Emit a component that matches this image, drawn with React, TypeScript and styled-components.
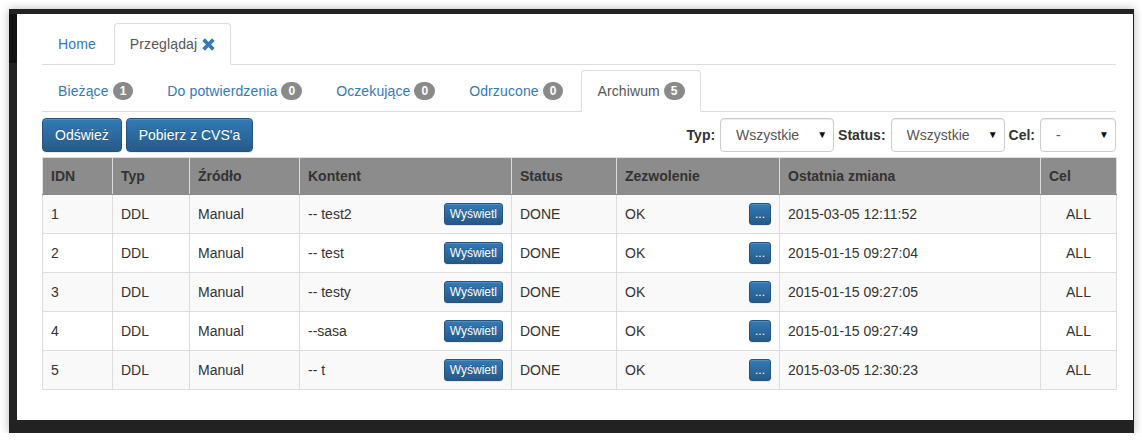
import React from 'react';
import styled, { createGlobalStyle } from 'styled-components';

const GlobalStyle = createGlobalStyle`
  html, body {
    margin: 0;
    padding: 0;
    background: #fff;
  }

  body {
    font-family: "Liberation Sans", Arial, Helvetica, sans-serif;
    font-size: 14px;
    line-height: 20px;
    color: #333;
  }

  * {
    box-sizing: border-box;
  }
`

type Row = {
  id: number;
  type: string;
  source: string;
  content: string;
  status: string;
  permission: string;
  changed: string;
  target: string;
}

const rows: Row[] = [
  {id: 1, type: 'DDL', source: 'Manual', content: '-- test2', status: 'DONE', permission: 'OK', changed: '2015-03-05 12:11:52', target: 'ALL'},
  {id: 2, type: 'DDL', source: 'Manual', content: '-- test', status: 'DONE', permission: 'OK', changed: '2015-01-15 09:27:04', target: 'ALL'},
  {id: 3, type: 'DDL', source: 'Manual', content: '-- testy', status: 'DONE', permission: 'OK', changed: '2015-01-15 09:27:05', target: 'ALL'},
  {id: 4, type: 'DDL', source: 'Manual', content: '--sasa', status: 'DONE', permission: 'OK', changed: '2015-01-15 09:27:49', target: 'ALL'},
  {id: 5, type: 'DDL', source: 'Manual', content: '-- t', status: 'DONE', permission: 'OK', changed: '2015-03-05 12:30:23', target: 'ALL'},
]

const subTabs = [
  {label: 'Bieżące', count: 1},
  {label: 'Do potwierdzenia', count: 0},
  {label: 'Oczekujące', count: 0},
  {label: 'Odrzucone', count: 0},
  {label: 'Archiwum', count: 5, active: true},
]

const columns = [
  {title: 'IDN', width: 70},
  {title: 'Typ', width: 77},
  {title: 'Źródło', width: 110},
  {title: 'Kontent', width: 212},
  {title: 'Status', width: 105},
  {title: 'Zezwolenie', width: 163},
  {title: 'Ostatnia zmiana', width: 261},
  {title: 'Cel', width: 76},
]

const CloseIcon = () => (
  <svg width="13" height="13" viewBox="0 0 12 12" style={{marginLeft: 5, marginTop: 1}}>
    <path d="M1.5 1.5 L10.5 10.5 M10.5 1.5 L1.5 10.5" stroke="#337ab7" strokeWidth="3.3" />
  </svg>
)

const Select = ({value, width}: {value: string; width: number}) => (
  <SelectWrap style={{width}}>
    <SelectBox defaultValue={value}>
      <option>{value}</option>
    </SelectBox>
    <Caret>▼</Caret>
  </SelectWrap>
)

const App = () => {
  return (
    <>
      <GlobalStyle/>
      <Frame>
        <Panel>
          <Tabs>
            <Tab><TabLink>Home</TabLink></Tab>
            <Tab $active><TabLink $active>Przeglądaj<CloseIcon/></TabLink></Tab>
          </Tabs>

          <Tabs $top={5}>
            {subTabs.map((t) => (
              <Tab key={t.label} $active={t.active}>
                <TabLink $active={t.active}>
                  {t.label}
                  <Badge>{t.count}</Badge>
                </TabLink>
              </Tab>
            ))}
          </Tabs>

          <Toolbar>
            <ButtonGroup>
              <Button>Odśwież</Button>
              <Button>Pobierz z CVS'a</Button>
            </ButtonGroup>
            <Filters>
              <FilterLabel>Typ:</FilterLabel>
              <Select value="Wszystkie" width={114}/>
              <FilterLabel>Status:</FilterLabel>
              <Select value="Wszystkie" width={114}/>
              <FilterLabel>Cel:</FilterLabel>
              <Select value="-" width={76}/>
            </Filters>
          </Toolbar>

          <Table>
            <colgroup>
              {columns.map((c) => <col key={c.title} style={{width: c.width}}/>)}
            </colgroup>
            <thead>
              <tr>
                {columns.map((c) => <Th key={c.title}>{c.title}</Th>)}
              </tr>
            </thead>
            <tbody>
              {rows.map((r) => (
                <Tr key={r.id}>
                  <Td>{r.id}</Td>
                  <Td>{r.type}</Td>
                  <Td>{r.source}</Td>
                  <Td>
                    <CellSplit>
                      <span>{r.content}</span>
                      <SmallButton>Wyświetl</SmallButton>
                    </CellSplit>
                  </Td>
                  <Td>{r.status}</Td>
                  <Td>
                    <CellSplit>
                      <span>{r.permission}</span>
                      <SmallButton>...</SmallButton>
                    </CellSplit>
                  </Td>
                  <Td>{r.changed}</Td>
                  <Td $center>{r.target}</Td>
                </Tr>
              ))}
            </tbody>
          </Table>
        </Panel>
      </Frame>
    </>
  )
}

const Frame = styled.div`
  width: 1125px;
  height: 424px;
  margin: 9px 0 0 9px;
  padding: 5px 1px 13px 8px;
  background: linear-gradient(#111, #111) 0 5px / 8px 49px no-repeat, #222;
  box-shadow: 0 0 9px rgba(0, 0, 0, 0.28);
`

const Panel = styled.div`
  height: 100%;
  padding: 9px 17px 0 25px;
  background: #fff;
`

const Tabs = styled.ul<{ $top?: number }>`
  display: flex;
  margin: ${({ $top }) => $top || 0}px 0 0;
  padding: 0;
  list-style: none;
  border-bottom: 1px solid #ddd;
`

const Tab = styled.li<{ $active?: boolean }>`
  margin-right: 2px;
  margin-bottom: -1px;
`

const TabLink = styled.a<{ $active?: boolean }>`
  display: flex;
  align-items: center;
  padding: 10px 15px;
  line-height: 20px;
  letter-spacing: 0.12px;
  border: 1px solid transparent;
  border-radius: 4px 4px 0 0;
  color: #337ab7;
  text-decoration: none;
  cursor: pointer;

  ${({ $active }) => $active && `
    color: #555;
    background: #fff;
    border-color: #ddd #ddd transparent;
  `}
`

const Badge = styled.span`
  display: inline-block;
  min-width: 10px;
  margin-left: 4px;
  padding: 3px 7px;
  font-size: 12px;
  font-weight: 700;
  line-height: 12px;
  letter-spacing: 0;
  color: #fff;
  text-align: center;
  background: #8a8a8a;
  border-radius: 10px;
`

const Toolbar = styled.div`
  display: flex;
  justify-content: space-between;
  align-items: center;
  margin-top: 6px;
`

const ButtonGroup = styled.div`
  display: flex;
  gap: 4px;
`

const Button = styled.button`
  height: 34px;
  padding: 6px 12px;
  font-family: inherit;
  font-size: 14px;
  line-height: 20px;
  color: #fff;
  text-shadow: 0 -1px 0 rgba(0, 0, 0, 0.2);
  background: linear-gradient(to bottom, #337ab7 0%, #265a88 100%);
  border: 1px solid #245580;
  border-radius: 4px;
  box-shadow: inset 0 1px 0 rgba(255, 255, 255, 0.15), 0 1px 1px rgba(0, 0, 0, 0.075);
  cursor: pointer;
`

const SmallButton = styled(Button)`
  height: 22px;
  padding: 1px 5px;
  font-size: 12px;
  line-height: 18px;
  border-radius: 3px;
`

const Filters = styled.div`
  display: flex;
  align-items: center;
`

const FilterLabel = styled.label`
  margin: 0 5px 0 4px;
  font-weight: 700;
  color: #333;
`

const SelectWrap = styled.div`
  position: relative;
  height: 34px;
`

const SelectBox = styled.select`
  width: 100%;
  height: 34px;
  padding: 6px 20px 6px 15px;
  font-family: inherit;
  font-size: 14px;
  color: #555;
  background: #fff;
  border: 1px solid #ccc;
  border-radius: 4px;
  box-shadow: inset 0 1px 1px rgba(0, 0, 0, 0.075);
  appearance: none;
  -webkit-appearance: none;
`

const Caret = styled.span`
  position: absolute;
  top: 11px;
  right: 7px;
  font-size: 10px;
  line-height: 12px;
  color: #111;
  pointer-events: none;
`

const Table = styled.table`
  width: 100%;
  margin-top: 5px;
  table-layout: fixed;
  border-collapse: collapse;
  border: 1px solid #ddd;
`

const Th = styled.th`
  padding: 8px;
  line-height: 20px;
  text-align: left;
  font-weight: 700;
  color: #333;
  background: #8c8c8c;
  border: 1px solid #ddd;
  border-top: none;
  border-bottom-color: #888;
`

const Tr = styled.tr`
  &:nth-child(odd) {
    background: #f9f9f9;
  }
`

const Td = styled.td<{ $center?: boolean }>`
  height: 39px;
  padding: 8px;
  line-height: 20px;
  vertical-align: middle;
  text-align: ${({ $center }) => $center ? 'center' : 'left'};
  border: 1px solid #ddd;
`

const CellSplit = styled.div`
  display: flex;
  justify-content: space-between;
  align-items: center;
  height: 22px;
`

export default App
